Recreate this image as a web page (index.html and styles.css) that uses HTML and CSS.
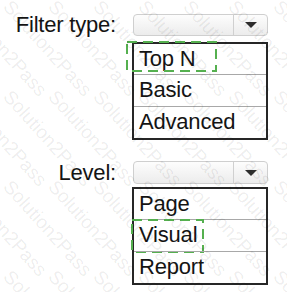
FILE: index.html
```html
<!DOCTYPE html>
<html lang="en">
<head>
  <meta charset="UTF-8" />
  <meta name="viewport" content="width=device-width, initial-scale=1.0"/>
  <title>Filter settings</title>
  <link rel="stylesheet" href="styles.css">
</head>
<body>
  <div class="page">

    <!-- Filter type -->
    <div class="field field-type">
      <span class="label">Filter type:</span>
      <div class="control">
        <div class="select">
          <span class="select-value"></span>
          <span class="select-arrow"></span>
        </div>
        <ul class="options">
          <li class="opt">Top N
            <svg class="mark mark-topn" width="91" height="31"><rect x="1" y="1" width="89" height="29"/></svg>
          </li>
          <li class="opt">Basic</li>
          <li class="opt">Advanced</li>
        </ul>
      </div>
    </div>

    <!-- Level -->
    <div class="field field-level">
      <span class="label">Level:</span>
      <div class="control">
        <div class="select">
          <span class="select-value"></span>
          <span class="select-arrow"></span>
        </div>
        <ul class="options">
          <li class="opt">Page</li>
          <li class="opt">Visual
            <svg class="mark mark-visual" width="73" height="34"><rect x="1" y="1" width="71" height="32"/></svg>
          </li>
          <li class="opt">Report</li>
        </ul>
      </div>
    </div>

    <div class="watermark" id="watermark"></div>
  </div>

  <script>
    // === Watermark tiles ===
    const wm = document.getElementById('watermark');
    for (let i = 0; i < 36; i++) {
      const s = document.createElement('span');
      s.textContent = 'Solution2Pass';
      wm.appendChild(s);
    }
  </script>
</body>
</html>
```

FILE: styles.css
```css
body {
  margin: 0;
  font-family: "Liberation Sans", Arial, sans-serif;
  color: #141414;
  background: #fff;
}
.page {
  position: relative;
  width: 287px;
  height: 292px;
  overflow: hidden;
  padding-top: 14px;
  box-sizing: border-box;
}
.field {
  display: grid;
  grid-template-columns: 116px 136px;
  column-gap: 16px;
  align-items: start;
}
.field-level { margin-top: 21px; }
.label {
  text-align: right;
  font-size: 22px;
  line-height: 22px;
  letter-spacing: -0.2px;
}
.field-level .label { line-height: 23px; }
.control {
  display: flex;
  flex-direction: column;
}
.select {
  display: flex;
  height: 22px;
  margin-left: 1px;
  width: 135px;
  border: 1px solid #cfcfcf;
  border-radius: 4px;
  box-sizing: border-box;
  background: linear-gradient(#fdfdfd, #ececec);
}
.field-level .select { height: 23px; }
.select-value { flex: 1; }
.select-arrow {
  width: 33px;
  border-left: 1px solid #d0d0d0;
  display: flex;
  align-items: center;
  justify-content: center;
}
.select-arrow::after {
  content: "";
  border-left: 6px solid transparent;
  border-right: 6px solid transparent;
  border-top: 6px solid #2e2e2e;
}
.options {
  list-style: none;
  margin: 6px 0 0;
  padding: 0;
  width: 136px;
  border: 2px solid #262626;
  box-sizing: border-box;
}
.field-level .options { margin-top: 3px; }
.opt {
  position: relative;
  height: 30px;
  line-height: 29px;
  padding-left: 5px;
  font-size: 22px;
  letter-spacing: -0.2px;
}
.opt + .opt {
  height: 31px;
  border-top: 1px solid #a8a8a8;
}
.mark {
  position: absolute;
  fill: none;
  stroke: #55b04f;
  stroke-width: 2;
  stroke-dasharray: 10 6;
}
.mark-topn { left: -8px; top: -3px; }
.mark-visual { left: -3px; top: -1px; }
.watermark {
  position: absolute;
  top: -4px;
  left: -75px;
  display: grid;
  grid-template-columns: repeat(9, 45px);
  grid-auto-rows: 90px;
  pointer-events: none;
}
.watermark span {
  display: block;
  white-space: nowrap;
  font-size: 19px;
  color: rgba(0, 0, 0, 0.08);
  transform: rotate(48deg);
  transform-origin: 0 0;
}
```
